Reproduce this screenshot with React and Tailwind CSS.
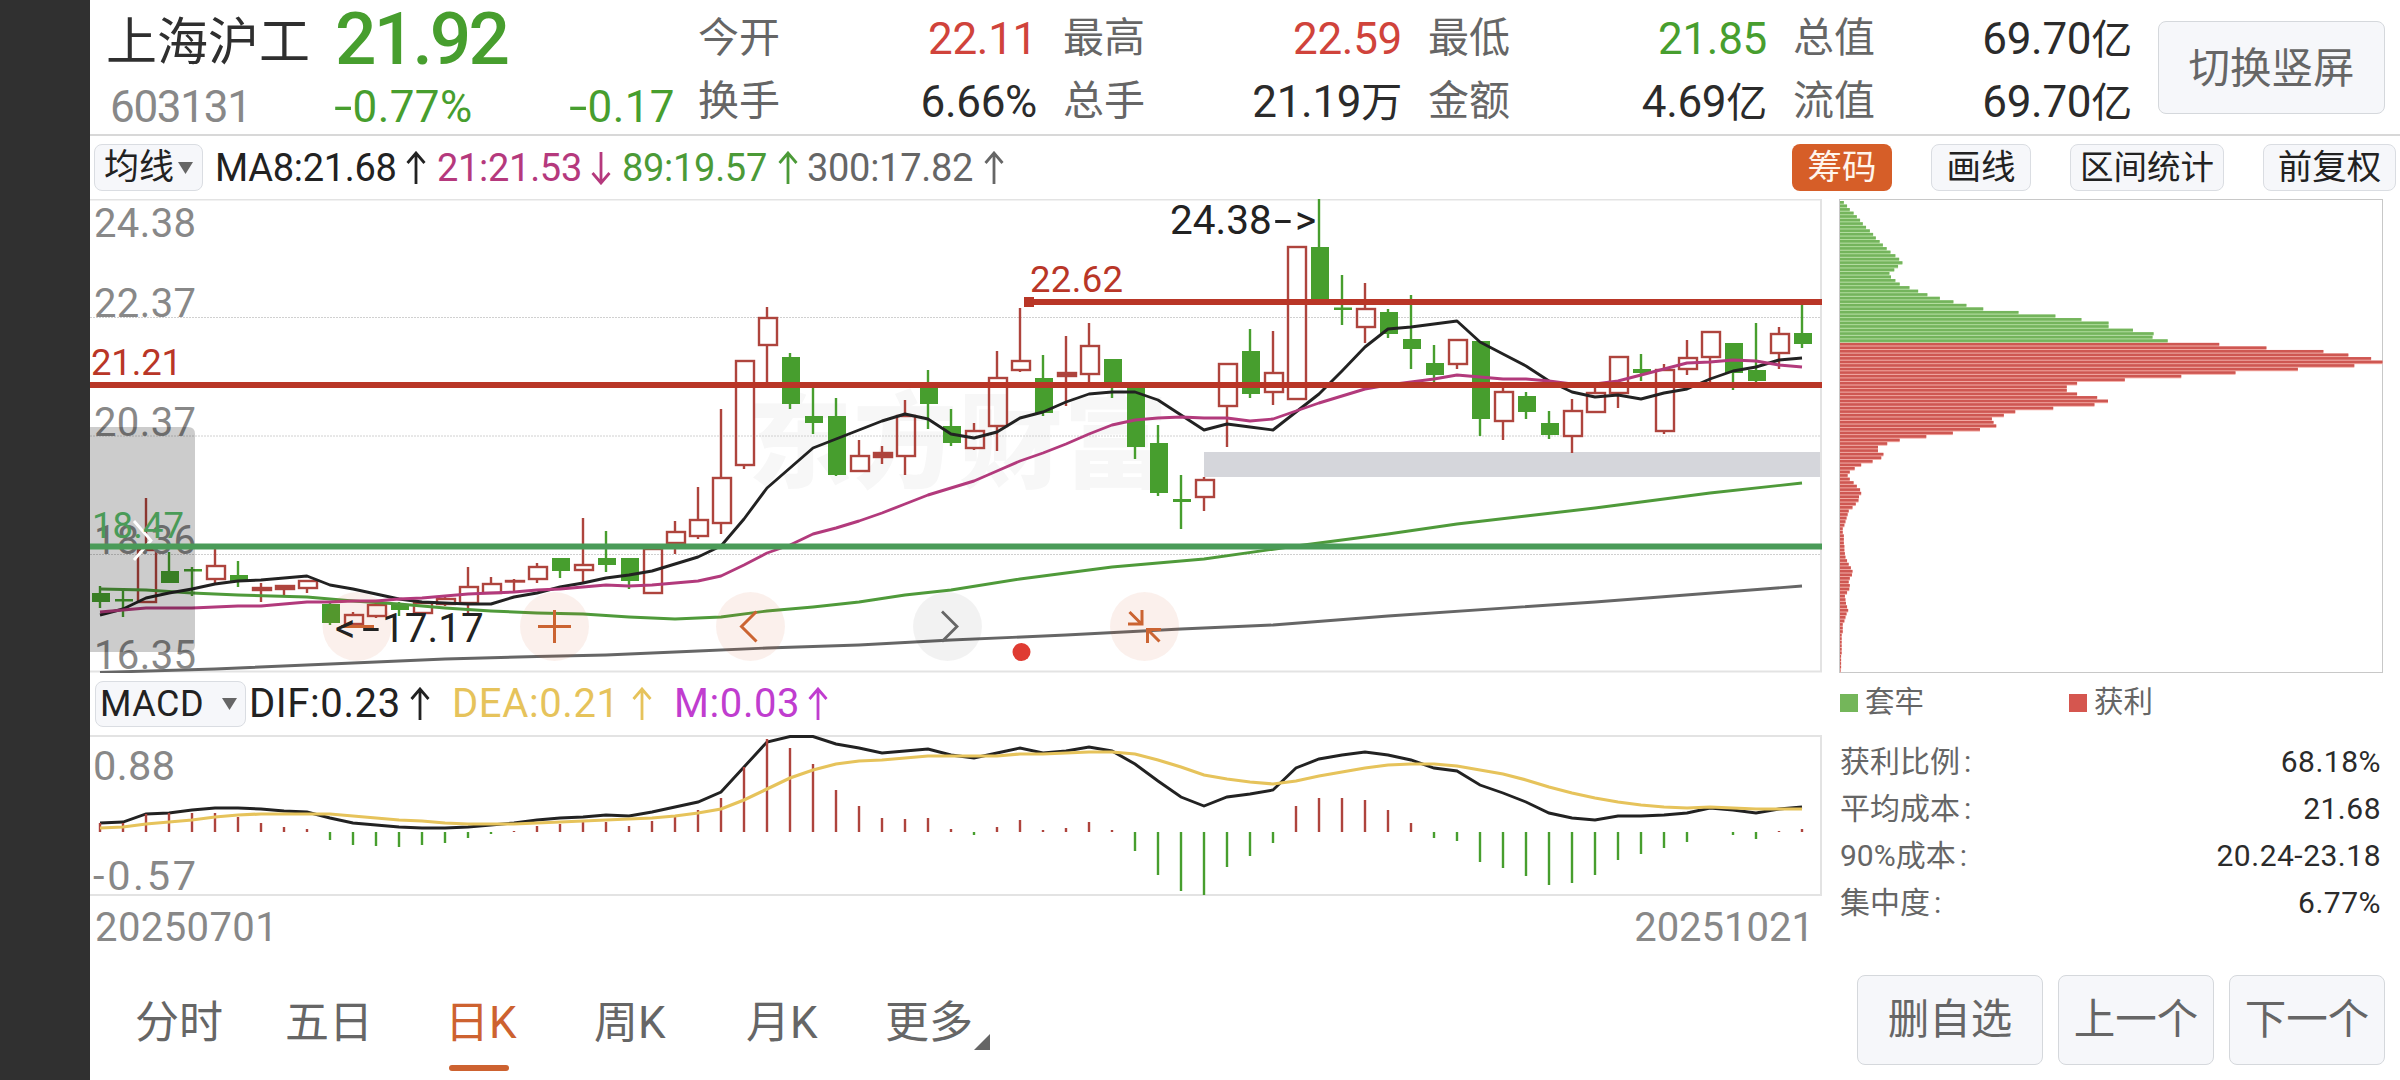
const RED = '#ae443d'
const GREEN = '#479e2e'
const LINE_RED = '#b93627'
const LINE_GREEN = '#4a9b58'

// [direction, high, body top, body bottom, low]
const CANDLES = [
  ['g', 586, 593, 602, 608], ['g', 591, 599, 601.5, 617], ['r', 498, 550, 602, 602], ['g', 552, 571, 583, 583],
  ['g', 567, 569, 571.5, 596], ['r', 549, 566, 579, 583], ['g', 561, 575, 581, 587], ['r', 583, 588, 590, 602],
  ['r', 585, 586, 589, 595], ['r', 580, 581, 588, 593], ['g', 603, 604, 623, 625], ['r', 612, 615, 624, 625],
  ['r', 603, 605, 616, 618], ['g', 602, 604, 610, 616], ['r', 602, 603, 613, 614], ['r', 596, 599, 604, 606],
  ['r', 567, 587, 603, 614], ['r', 577, 584, 593, 593], ['r', 579, 581, 581.5, 591], ['r', 563, 567, 579, 583],
  ['g', 558, 558, 571, 578], ['r', 518, 565, 570, 582], ['g', 531, 558, 565, 572], ['g', 558, 558, 581, 589],
  ['r', 549, 549, 593, 593], ['r', 521, 532, 543, 554], ['r', 487, 520, 536, 539], ['r', 409, 478, 523, 534],
  ['r', 361, 361, 465, 469], ['r', 307, 318, 345, 383], ['g', 353, 357, 404, 409], ['g', 383, 416, 423, 434],
  ['g', 398, 416, 475, 476], ['r', 440, 456, 471, 472], ['r', 446, 453, 457, 464], ['r', 400, 416, 456, 475],
  ['g', 370, 387, 404, 429], ['g', 409, 426, 443, 446], ['r', 423, 431, 448, 450], ['r', 351, 378, 426, 451],
  ['r', 308, 361, 370, 372], ['g', 355, 378, 413, 416], ['r', 336, 373, 376, 406], ['r', 323, 346, 374, 383],
  ['g', 359, 359, 384, 398], ['g', 385, 387, 447, 459], ['g', 425, 443, 493, 496], ['g', 475, 499, 502, 529],
  ['r', 477, 480, 497, 511], ['r', 364, 364, 406, 447], ['g', 329, 351, 394, 398], ['r', 331, 373, 392, 405],
  ['r', 247, 247, 399, 399], ['g', 199, 247, 299, 299], ['g', 275, 307.5, 310, 325], ['r', 283, 309, 327, 343],
  ['g', 309, 312, 334, 338], ['g', 295, 339, 349, 369], ['g', 345, 363, 375, 382], ['r', 339, 340, 364, 369],
  ['g', 341, 341, 419, 436], ['r', 388, 392, 421, 440], ['g', 392, 396, 412, 419], ['g', 411, 423, 435, 439],
  ['r', 399, 411, 436, 453], ['r', 387, 393, 412, 412], ['r', 357, 357, 393, 408], ['g', 354, 369, 373, 381],
  ['r', 364, 370, 431, 434], ['r', 340, 358, 369, 375], ['r', 332, 332, 357, 383], ['g', 343, 343, 373, 390],
  ['g', 323, 370, 381, 383], ['r', 327, 334, 353, 369], ['g', 304, 333, 344, 348],
]

const MA8 = [
  615, 609, 598, 593, 589, 584, 581, 580, 578, 576, 585, 589, 594, 599, 602, 603, 604, 604, 597, 593,
  587, 583, 578, 575, 571, 564, 557, 546, 519, 488, 468, 448, 439, 430, 421, 414, 419, 434, 438, 432,
  418, 412, 402, 394, 392, 392, 400, 415, 430, 424, 427, 430, 412, 394, 371, 347, 329, 327, 324, 321,
  342, 354, 366, 381, 392, 397, 395, 399, 393, 389, 379, 371, 367, 360, 358,
]

const MA21 = [
  612, 610, 608, 608, 608, 607, 606, 606, 604, 602, 602, 601, 601, 599, 598, 596, 594, 593, 592, 590,
  589, 587, 585, 586, 585, 583, 581, 576, 565, 553, 545, 534, 528, 521, 513, 504, 495, 488, 481, 471,
  461, 453, 444, 434, 425, 420, 418, 417, 418, 418, 421, 419, 411, 403, 396, 389, 385, 382, 379, 375,
  377, 379, 379, 381, 384, 384, 381, 375, 369, 363, 362, 360, 361, 365, 367,
]

// long averages only need a few knots: [candle index, y]
const MA89 = [
  [0, 589], [2, 590], [4, 593], [6, 595], [9, 597], [11, 601], [13, 604], [15, 608], [17, 611], [19, 613],
  [21, 614], [23, 617], [25, 619], [26, 618], [27, 617], [29, 611], [31, 607], [33, 602], [35, 595], [37, 590],
  [40, 579], [44, 567], [48, 559], [52, 546], [56, 534], [59, 524], [62, 516], [65, 508], [70, 493], [74, 483],
]
const MA300 = [
  [0, 672.5], [5, 669], [10, 664], [15, 659], [19, 656.5], [22, 655], [26, 651], [29, 648], [33, 645],
  [37, 640], [42, 635], [47, 629], [51, 625], [56, 616], [65, 602], [74, 586],
]

const DIF = [
  823, 822, 814, 813, 810, 808, 808, 809, 811, 812, 818, 823, 825, 827, 828, 828, 827, 825, 823, 820,
  818, 817, 815, 816, 812, 807, 802, 792, 767, 742, 736.5, 736.5, 744, 748, 753, 751, 749, 755, 758, 753,
  748, 753, 751, 747, 751, 764, 781, 797, 806, 797, 794, 790, 768, 759, 755, 752, 755, 760, 768, 771,
  785, 793, 802, 813, 818, 820, 816, 816, 815, 813, 808, 810, 813, 809, 807,
]
const DEA = [
  828, 827, 824, 822, 820, 817, 815, 814, 814, 814, 814, 816, 818, 820, 821, 823, 824, 824, 824, 823,
  822, 821, 820, 819, 818, 816, 813, 809, 800, 789, 778, 770, 764, 761, 760, 758, 756, 756, 756, 756,
  754, 754, 753, 752, 752, 754, 760, 767, 775, 779, 782, 784, 781, 776, 772, 768, 765, 764, 764, 766,
  770, 774, 780, 787, 793, 798, 802, 805, 807, 808, 807, 808, 809, 809, 809,
]
const HISTOGRAM = [
  9, 9, 18, 19, 19, 19, 15, 9, 5, 3, -8, -13, -14, -15, -13, -11, -6, -2, 1, 6, 8, 10, 10, 6, 11, 16,
  22, 34, 65, 93, 84, 68, 42, 26, 14, 13, 14, 3, -3, 5, 12, 2, 4, 10, 2, -19, -43, -59, -63, -35, -24,
  -11, 26, 34, 34, 32, 22, 9, -6, -9, -30, -36, -44, -53, -51, -43, -28, -22, -16, -10, 0, -3, -7, 1, 3,
]

// chip distribution, per mille of the longest bar
const TRAPPED = [
  7, 13, 18, 25, 31, 37, 42, 48, 55, 61, 66, 73, 79, 86, 93, 102, 109, 115, 107, 100, 91, 94, 102, 110, 128,
  144, 161, 184, 209, 233, 264, 329, 397, 445, 495, 495, 540, 578, 576, 604,
]
const PROFIT = [
  699, 786, 891, 937, 979, 1000, 948, 844, 729, 629, 525, 437, 418, 418, 437, 474, 494, 469, 393, 323, 302,
  280, 283, 288, 258, 208, 159, 110, 87, 70, 70, 80, 76, 60, 39, 27, 18, 14, 18, 25, 31, 37, 39, 35, 34, 29,
  23, 16, 14, 12, 10, 8, 5, 5, 7, 7, 7, 8, 8, 9, 10, 13, 16, 20, 23, 22, 18, 16, 18, 17, 13, 9, 10, 11, 13,
  15, 12, 10, 8, 5, 5, 5, 3, 3, 3, 3, 3, 3, 2, 2, 2, 2, 1,
]

const STATS = [
  [['今开', '22.11', 'text-[#d0433b]'], ['换手', '6.66%', 'text-[#2b2b2b]']],
  [['最高', '22.59', 'text-[#d0433b]'], ['总手', '21.19万', 'text-[#2b2b2b]']],
  [['最低', '21.85', 'text-[#479e2e]'], ['金额', '4.69亿', 'text-[#2b2b2b]']],
  [['总值', '69.70亿', 'text-[#2b2b2b]'], ['流值', '69.70亿', 'text-[#2b2b2b]']],
]

const AVERAGES = [
  { text: 'MA8:21.68', cls: 'w-[222px] text-[#222]', textCls: 'w-[191px]' },
  { text: '21:21.53', cls: 'w-[185px] text-[#b5397d]', textCls: 'w-[154px]', down: true },
  { text: '89:19.57', cls: 'w-[185px] text-[#4b9a37]', textCls: 'w-[156px]' },
  { text: '300:17.82', cls: 'w-[200px] text-[#666]', textCls: 'w-[177px]' },
]

const MACD_VALUES = [
  { text: 'DIF:0.23', cls: 'w-[203px] text-[#222]', textCls: 'w-[161px]' },
  { text: 'DEA:0.21', cls: 'w-[222px] text-[#e6c35b]', textCls: 'w-[180px]' },
  { text: 'M:0.03', cls: 'w-[200px] text-[#c03dcf]', textCls: 'w-[134px]' },
]

const COSTS = [
  ['获利比例', '68.18%'],
  ['平均成本', '21.68'],
  ['90%成本', '20.24-23.18'],
  ['集中度', '6.77%'],
]

const xAt = (i) => 100 + i * 23
const toPoints = (ys) => ys.map((y, i) => `${xAt(i)},${y}`).join(' ')
const knotPoints = (knots) => knots.map(([i, y]) => `${xAt(i)},${y}`).join(' ')

function Arrow({ down }) {
  return (
    <svg width="20" height="34" viewBox="0 0 20 34" fill="none" stroke="currentColor" strokeWidth="2.8" className={down ? 'rotate-180' : ''}>
      <path d="M10 33V2M1.500 12L10 2l8.500 10" />
    </svg>
  )
}

function Caret() {
  return (
    <svg width="15" height="12" viewBox="0 0 15 12" fill="#666">
      <path d="M0 0h15L7.500 12z" />
    </svg>
  )
}

function Candle({ data, index }) {
  const [dir, high, top, bottom, low] = data
  const x = xAt(index)
  if (dir === 'g') {
    return (
      <g fill={GREEN}>
        <rect x={x - 1.2} y={high} width="2.4" height={low - high} />
        <rect x={x - 8} y={top} width="18" height={bottom - top} />
      </g>
    )
  }
  return (
    <g stroke={RED} strokeWidth="2.4" fill="none">
      <path d={`M${x} ${high}V${top}M${x} ${bottom}V${low}`} />
      <rect x={x - 8} y={top} width="18" height={bottom - top} fill={bottom - top < 5 ? RED : 'none'} />
    </g>
  )
}

function Label({ x, y, size = 40, width, fill = '#888', children }) {
  return (
    <text x={x} y={y} fontSize={size} fill={fill} textLength={width}>
      {children}
    </text>
  )
}

function KLineChart() {
  return (
    <svg width="1732" height="474" viewBox="90 199 1732 474" className="block">
      <text x="748" y="480" fontSize="104" fontWeight="900" fill="#f7f7f7" textLength="420">东方财富</text>
      <path d="M90 317.500H1821M90 436H1821M90 554.500H1821" stroke="#d0d0d0" strokeDasharray="2 1" />
      <rect x="1204" y="452" width="617" height="25" fill="#d5d6db" />
      <path d="M90 199.500H1821V671.500H90" fill="none" stroke="#e3e3e3" strokeWidth="2" />

      {CANDLES.map((c, i) => <Candle key={i} data={c} index={i} />)}

      <g fill="none" strokeWidth="2.900" strokeLinejoin="round">
        <polyline points={knotPoints(MA300)} stroke="#666" />
        <polyline points={knotPoints(MA89)} stroke="#4f9a3a" />
        <polyline points={toPoints(MA8)} stroke="#222" />
        <polyline points={toPoints(MA21)} stroke="#b23a7c" />
      </g>

      <Label x={94} y={237} width={102}>24.38</Label>
      <Label x={94} y={317} width={102}>22.37</Label>
      <Label x={94} y={436} width={102}>20.37</Label>
      <Label x={94} y={554} width={102}>18.36</Label>
      <Label x={94} y={669} width={102}>16.35</Label>

      {/* drawer handle */}
      <path d="M90 427h98q7 0 7 7v211q0 7 -7 7H90z" fill="#000" fillOpacity="0.2" />
      <path d="M134 521l17 19.500l-17 19.500" fill="none" stroke="#fff" strokeWidth="2.800" />

      {/* zoom and pan buttons */}
      <g fill="#d65e28" fillOpacity="0.09">
        <circle cx="357" cy="626.500" r="34.500" />
        <circle cx="554.500" cy="626.500" r="34.500" />
        <circle cx="750.500" cy="626.500" r="34.500" />
        <circle cx="947.500" cy="626.500" r="34.500" fill="#000" fillOpacity="0.05" />
        <circle cx="1144.500" cy="626.500" r="34.500" />
      </g>
      <g fill="none" stroke="#cb6432" strokeWidth="3">
        <path d="M341 626.500h33M538 626.500h33M554.500 610v33" />
        <path d="M756.500 611.500l-15 15l15 15" />
        <path d="M1129.500 612l12 12M1128 624h14v-14M1159.500 641.500l-12 -12M1147.500 643v-13.500h13.500" />
      </g>
      <path d="M942 611.500l15 15l-15 15" fill="none" stroke="#666" strokeWidth="2.800" />
      <circle cx="1021.500" cy="652" r="9" fill="#df3b32" />

      {/* user drawn price levels */}
      <path d="M1024 302H1822M90 385H1822" stroke={LINE_RED} strokeWidth="6" />
      <rect x="1024" y="297" width="10" height="10" fill={LINE_RED} />
      <path d="M90 546.500H1822" stroke={LINE_GREEN} strokeWidth="6" />
      <Label x={91} y={375} size={36.500} width={91} fill={LINE_RED}>21.21</Label>
      <Label x={1030} y={292} size={36.500} width={93} fill={LINE_RED}>22.62</Label>
      <Label x={92} y={537.500} size={36.500} width={92} fill={LINE_GREEN}>18.47</Label>

      {/* period high and low */}
      <g fontSize="40.500" fill="#222">
        <text x="1170" y="234">24.38</text>
        <text transform="translate(1274 234) scale(1.6 1)">-</text>
        <text x="1295" y="234">&gt;</text>
        <text x="335" y="642">&lt;</text>
        <text transform="translate(362 642) scale(1.6 1)">-</text>
        <text x="382" y="642">17.17</text>
      </g>
    </svg>
  )
}

function MacdChart() {
  return (
    <svg width="1732" height="161" viewBox="90 735 1732 161" className="block">
      <path d="M90 736H1821V895H90" fill="none" stroke="#e3e3e3" strokeWidth="2" />
      <Label x={93} y={780} size={41.500} width={82}>0.88</Label>
      <Label x={93} y={890} size={41.500} width={103}>-0.57</Label>
      <polyline points={toPoints(DIF)} fill="none" stroke="#222" strokeWidth="2.900" />
      {HISTOGRAM.map((v, i) => (
        <rect key={i} x={xAt(i) - 1.2} y={v > 0 ? 832 - v : 832} width="2.4" height={Math.abs(v)} fill={v > 0 ? RED : GREEN} />
      ))}
      <polyline points={toPoints(DEA)} fill="none" stroke="#e6c35b" strokeWidth="3.200" />
    </svg>
  )
}

function ChipChart() {
  const bars = [...TRAPPED, ...PROFIT]
  return (
    <svg width="544" height="474" viewBox="1839 199 544 474" className="block">
      <rect x="1839.500" y="199.500" width="543" height="473" fill="none" stroke="#c8c8c8" />
      {bars.map((v, i) => {
        const trapped = i < TRAPPED.length
        const y = 201 + i * 3.547
        const width = v * 0.5425
        return (
          <g key={i}>
            <rect x="1840" y={y} width={width} height="3.547" fill={trapped ? '#b4dfa0' : '#f3aaa3'} />
            <rect x="1840" y={y} width={width} height="2.600" fill={trapped ? '#74b45c' : '#ce5752'} />
          </g>
        )
      })}
    </svg>
  )
}

function Minus() {
  return <span className="mr-[6px] inline-block origin-left scale-x-150">-</span>
}

function Header() {
  return (
    <header className="flex h-[136px] border-b-2 border-[#d8d8d8]">
      <div className="w-[608px] pl-4">
        <div className="flex h-[78px] items-center">
          <span className="w-[229px] pt-2 text-[51px] leading-tight text-[#2f2f2f]">上海沪工</span>
          <span className="text-[73px] leading-none font-medium tracking-[-2.800px] text-[#479e2e]">21.92</span>
        </div>
        <div className="flex h-[57px] items-center text-[44px] leading-none tracking-[0.4px]">
          <span className="w-[228px] pl-1 tracking-[-1.300px] text-[#888]">603131</span>
          <span className="w-[235px] text-[#479e2e]"><Minus />0.77%</span>
          <span className="text-[#479e2e]"><Minus />0.17</span>
        </div>
      </div>
      {STATS.map((rows, i) => (
        <div key={i} className="flex w-[365px] flex-col pt-[7px] pr-[26px]">
          {rows.map(([label, value, color]) => (
            <div key={label} className="flex h-[63px] items-center justify-between leading-none">
              <span className="text-[41px] text-[#666]">{label}</span>
              <span className={`text-[44px] tracking-[-0.3px] ${color}`}>
                {value.replace(/[万亿]/, '')}
                {/[万亿]/.test(value) && <span className="text-[41px]">{value.slice(-1)}</span>}
              </span>
            </div>
          ))}
        </div>
      ))}
      <button className="mt-[21px] h-[93px] w-[227px] rounded-lg border border-[#d5d8dc] bg-[#f6f7fa] pt-[3px] text-[41.500px] leading-none text-[#666]">
        切换竖屏
      </button>
    </header>
  )
}

function Toolbar() {
  return (
    <div className="flex h-[63px] items-center pl-1">
      <button className="flex h-[47px] w-[109px] items-center gap-1 rounded-lg border border-[#dadde2] bg-[#f6f7fa] pl-[9px] text-[35px] leading-none text-[#222]">
        均线
        <Caret />
      </button>
      <div className="flex grow pl-[12px] text-[38px] leading-none tracking-[-0.3px]">
        {AVERAGES.map((a) => (
          <div key={a.text} className={`flex items-center ${a.cls}`}>
            <span className={a.textCls}>{a.text}</span>
            <Arrow down={a.down} />
          </div>
        ))}
      </div>
      <div className="flex pr-[4px] text-[34.500px] leading-none text-[#222]">
        <button className="mr-[39px] h-[47px] w-[100px] rounded-lg bg-[#d65e28] text-[#fff5ec]">筹码</button>
        <button className="mr-[39px] h-[47px] w-[100px] rounded-lg border border-[#dadde2] bg-[#f6f7fa]">画线</button>
        <button className="mr-[39px] h-[47px] w-[154px] rounded-lg border border-[#dadde2] bg-[#f6f7fa] text-[33.500px]">区间统计</button>
        <button className="h-[47px] w-[133px] rounded-lg border border-[#dadde2] bg-[#f6f7fa]">前复权</button>
      </div>
    </div>
  )
}

function MacdBar() {
  return (
    <div className="flex h-[62px] items-center pl-[5px]">
      <button className="flex h-[46px] w-[151px] items-center justify-between rounded-lg border border-[#dadde2] bg-[#f6f7fa] pr-2 pl-1 text-[36px] leading-none tracking-[0.5px] text-[#222]">
        MACD
        <Caret />
      </button>
      <div className="flex pl-[3px] text-[40px] leading-none tracking-[0.6px]">
        {MACD_VALUES.map((m) => (
          <div key={m.text} className={`flex items-center ${m.cls}`}>
            <span className={m.textCls}>{m.text}</span>
            <Arrow />
          </div>
        ))}
      </div>
    </div>
  )
}

function ChipPanel() {
  return (
    <section className="ml-[17px] w-[544px]">
      <ChipChart />
      <div className="flex h-[60px] items-center text-[29.500px] leading-none text-[#666]">
        <div className="flex w-[230px] items-center gap-[7px] pl-px">
          <i className="size-[18px] bg-[#74b65a]" />
          套牢
        </div>
        <div className="flex items-center gap-[7px]">
          <i className="size-[18px] bg-[#d5564f]" />
          获利
        </div>
      </div>
      <dl className="pt-[5px] pr-[2px] pl-px text-[30px] leading-none">
        {COSTS.map(([label, value]) => (
          <div key={label} className="flex h-[47px] items-center justify-between">
            <dt className="text-[#666]">{label}<span className="pl-1">:</span></dt>
            <dd className="tracking-[0.5px] text-[#2b2b2b]">{value}</dd>
          </div>
        ))}
      </dl>
    </section>
  )
}

function Footer() {
  return (
    <footer className="flex h-[105px] items-start justify-between pr-[15px] pl-[45px]">
      <nav className="flex h-[96px] text-[44px] leading-none text-[#666]">
        <span className="w-[150px] pt-[26px]">分时</span>
        <span className="w-[160px] pt-[26px]">五日</span>
        <span className="flex w-[149px] flex-col justify-between pt-[26px] text-[#cd6230]">
          日K
          <i className="ml-[4px] h-[6px] w-[60px] rounded-full bg-[#cd6230]" />
        </span>
        <span className="w-[152px] pt-[26px]">周K</span>
        <span className="w-[139px] pt-[26px]">月K</span>
        <span className="flex items-end pb-[21px]">
          <span className="pb-[5px]">更多</span>
          <svg width="16" height="16" viewBox="0 0 16 16" fill="#666" className="ml-px">
            <path d="M16 0v16H0z" />
          </svg>
        </span>
      </nav>
      <div className="flex gap-[15px] text-[41.500px] leading-none text-[#666]">
        <button className="h-[90px] w-[186px] rounded-lg border border-[#d5d8dc] bg-[#f6f7fa]">删自选</button>
        <button className="h-[90px] w-[156px] rounded-lg border border-[#d5d8dc] bg-[#f6f7fa]">上一个</button>
        <button className="h-[90px] w-[156px] rounded-lg border border-[#d5d8dc] bg-[#f6f7fa]">下一个</button>
      </div>
    </footer>
  )
}

export default function App() {
  return (
    <div className="flex h-[1080px] w-[2400px] overflow-hidden bg-white font-[Roboto,'Noto_Sans_CJK_SC',sans-serif] whitespace-nowrap">
      <aside className="w-[90px] shrink-0 bg-[#303030]" />
      <main className="flex w-[2310px] flex-col">
        <Header />
        <Toolbar />
        <div className="flex h-[776px]">
          <section className="w-[1732px]">
            <KLineChart />
            <MacdBar />
            <MacdChart />
            <div className="flex justify-between pt-[12px] pr-[8px] pl-[5px] text-[40px] leading-none text-[#888]">
              <span className="tracking-[0.4px]">20250701</span>
              <span>20251021</span>
            </div>
          </section>
          <ChipPanel />
        </div>
        <Footer />
      </main>
    </div>
  )
}
